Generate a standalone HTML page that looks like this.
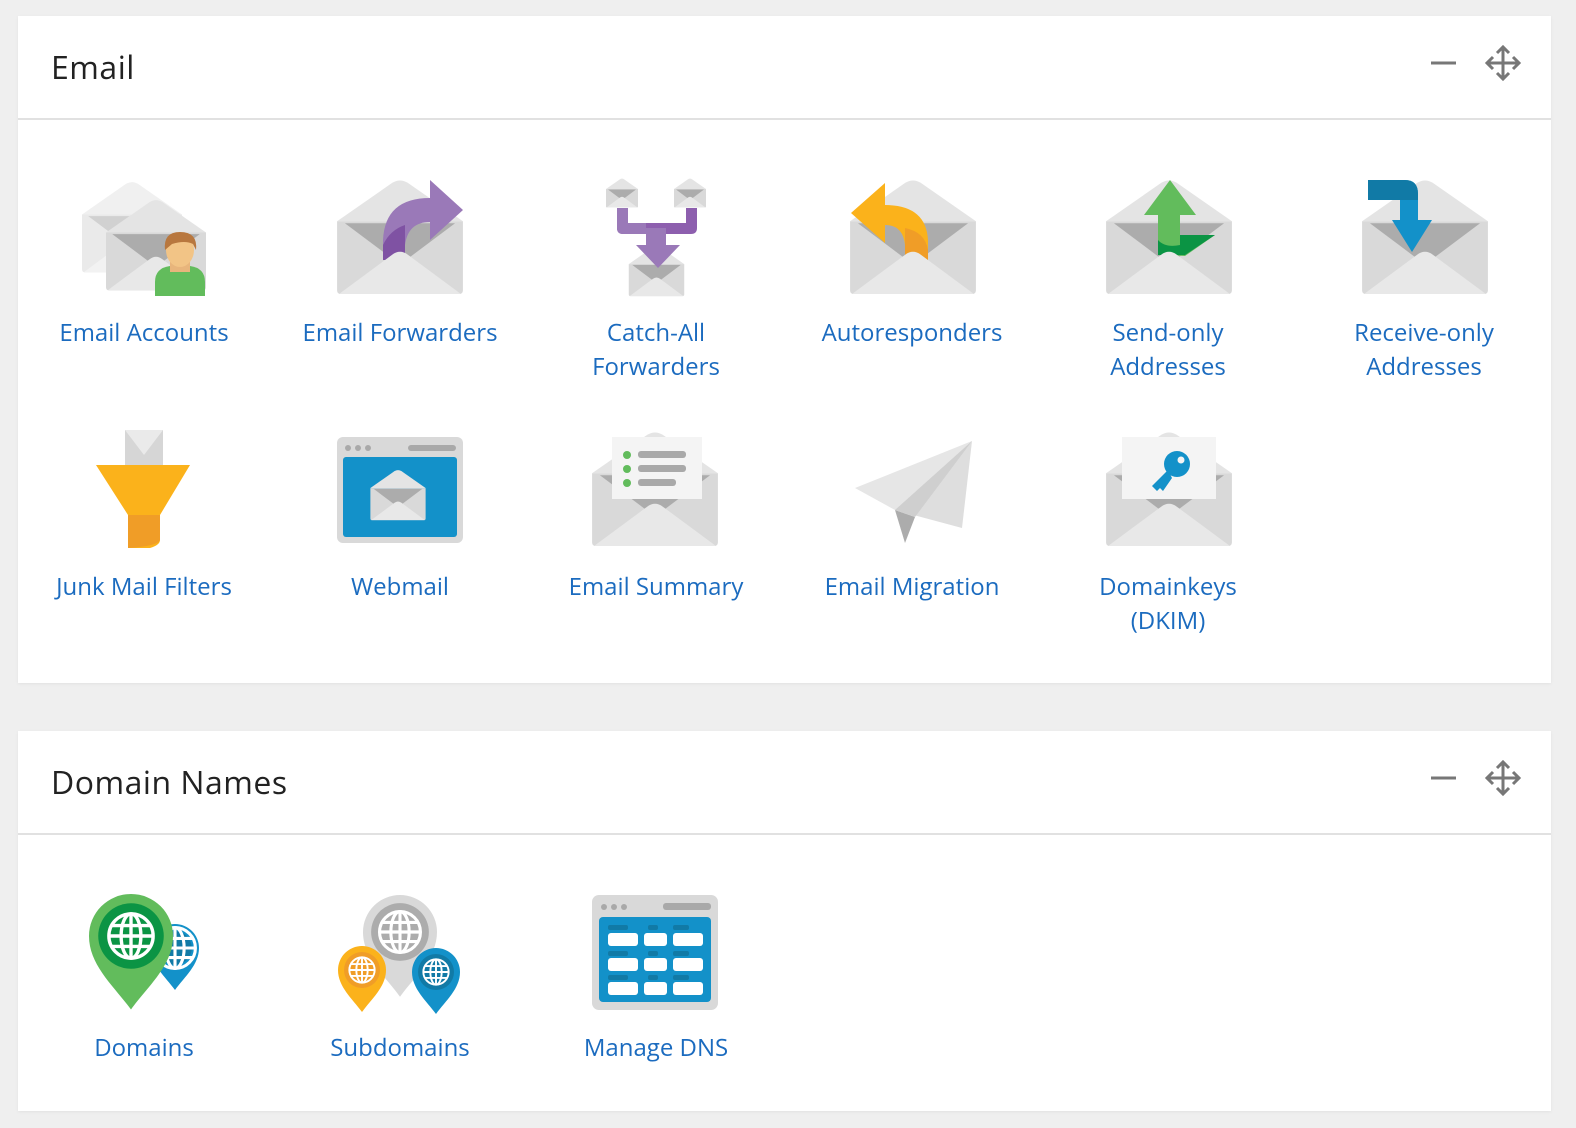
<!DOCTYPE html>
<html style="overflow:hidden"><head><meta charset="utf-8"><style>
html,body{margin:0;padding:0;overflow:hidden}
body{width:1576px;height:1128px;background:#efefef;font-family:"Open Sans","Liberation Sans",sans-serif;position:relative}
.panel{position:absolute;left:18px;width:1533px;background:#fff;box-shadow:0 1px 3px rgba(0,0,0,.06)}
.hd{height:102px;border-bottom:2px solid #e1e1e1;position:relative}
.hd h2{margin:0;position:absolute;left:33px;top:30px;font-weight:400;font-size:32px;color:#222;letter-spacing:.5px}
.lbl{position:absolute;width:256px;text-align:center;font-size:24px;line-height:34px;color:#1b6bbf}
svg.ov{position:absolute;left:0;top:0}
</style></head><body>
<div class="panel" style="top:16px;height:667px"><div class="hd"><h2>Email</h2></div></div>
<div class="panel" style="top:731px;height:380px"><div class="hd"><h2>Domain Names</h2></div></div>

<div class="lbl" style="left:16px;top:316px">Email Accounts</div>
<div class="lbl" style="left:272px;top:316px">Email Forwarders</div>
<div class="lbl" style="left:528px;top:316px">Catch-All<br>Forwarders</div>
<div class="lbl" style="left:784px;top:316px">Autoresponders</div>
<div class="lbl" style="left:1040px;top:316px">Send-only<br>Addresses</div>
<div class="lbl" style="left:1296px;top:316px">Receive-only<br>Addresses</div>
<div class="lbl" style="left:16px;top:570px">Junk Mail Filters</div>
<div class="lbl" style="left:272px;top:570px">Webmail</div>
<div class="lbl" style="left:528px;top:570px">Email Summary</div>
<div class="lbl" style="left:784px;top:570px">Email Migration</div>
<div class="lbl" style="left:1040px;top:570px">Domainkeys<br>(DKIM)</div>
<div class="lbl" style="left:16px;top:1031px">Domains</div>
<div class="lbl" style="left:272px;top:1031px">Subdomains</div>
<div class="lbl" style="left:528px;top:1031px">Manage DNS</div>

<svg class="ov" width="1576" height="1128" viewBox="0 0 1576 1128">
<defs>
<symbol id="eb" viewBox="0 0 128 120">
<path d="M0 44 L56 5 Q64 0 72 5 L128 44 Z" fill="#e4e4e4"/>
<path d="M0 44 H128 V114 Q128 118 124 118 H4 Q0 118 0 114Z" fill="#d9d9d9"/>
<path d="M8 46 H120 L64 88 Z" fill="#acacac"/>
</symbol>
<symbol id="ef" viewBox="0 0 128 120">
<path d="M2 118 L56 78 Q64 72 72 78 L126 118 Z" fill="#e8e8e8"/>
</symbol>
<symbol id="env" viewBox="0 0 128 120"><use href="#eb" width="128" height="120"/><use href="#ef" width="128" height="120"/></symbol>
<g id="globe" fill="none" stroke="#fff" stroke-width="0.13"><circle r="0.85"/><ellipse rx="0.38" ry="0.85"/><path d="M-0.85 0H0.85M-0.75 -0.4H0.75M-0.75 0.4H0.75M0 -0.85V0.85"/></g>
<path id="pin" d="M-1,0 A1,1 0 1,1 1,0 C1,0.7 0.4,1.2 0,1.75 C-0.4,1.2 -1,0.7 -1,0 Z"/>
</defs>

<g fill="none" stroke="#777" stroke-width="3">
<path d="M1431 63H1456M1431 778H1456"/>
<path d="M1503 48V78M1488 63H1518M1497 53L1503 47L1509 53M1497 73L1503 79L1509 73M1493 57L1487 63L1493 69M1513 57L1519 63L1513 69"/>
<path d="M1503 763V793M1488 778H1518M1497 768L1503 762L1509 768M1497 788L1503 794L1509 788M1493 772L1487 778L1493 784M1513 772L1519 778L1513 784"/>
</g>

<g opacity="0.55"><use href="#env" x="82" y="180" width="100" height="94"/></g>
<use href="#env" x="106" y="198" width="100" height="94"/>
<path d="M155 296 V282 Q155 268 170 266 H190 Q205 268 205 282 V296Z" fill="#62bc5c"/>
<rect x="170" y="256" width="20" height="16" fill="#e8b57c"/>
<ellipse cx="180" cy="250" rx="14" ry="17" fill="#f2c486"/>
<path d="M165 250 Q163 232 180 232 Q198 232 196 250 L193 244 Q185 240 172 244Z" fill="#b8773e"/>

<use href="#eb" x="337" y="178" width="126" height="118"/>
<path d="M383 260 V240 Q385 198 430 198 V180 L463 210 L430 240 V222 Q408 222 405 245 V260Z" fill="#9a79b8"/>
<path d="M383 260 V245 Q390 230 405 225 V260Z" fill="#7f52a3"/>
<use href="#ef" x="337" y="178" width="126" height="118"/>

<use href="#env" x="597" y="178" width="50" height="30"/>
<use href="#env" x="665" y="178" width="50" height="30"/>
<use href="#eb" x="620" y="245" width="73" height="52"/>
<path d="M617 208 V228 Q617 234 623 234 H691 Q697 234 697 228 V208 H686 V223 H628 V208Z" fill="#8d5fae"/>
<path d="M617 208 V228 Q617 234 623 234 H646 V223 H628 V208Z" fill="#9a79b8"/>
<path d="M646 228 H666 V245 H680 L658 268 L636 245 H646Z" fill="#9a79b8"/>
<use href="#ef" x="620" y="245" width="73" height="52"/>

<use href="#eb" x="850" y="178" width="126" height="118"/>
<path d="M928 260 V240 Q926 205 885 205 V183 L851 213 L885 243 V225 Q903 225 905 245 V260Z" fill="#fbb21b"/>
<path d="M905 228 Q925 232 928 250 V260 H905Z" fill="#f09d27"/>
<use href="#ef" x="850" y="178" width="126" height="118"/>

<use href="#eb" x="1106" y="178" width="126" height="118"/>
<path d="M1158 255 V215 H1144 L1170 180 L1196 215 H1180 V235 H1215 L1185 256Z" fill="#62bc5c"/>
<path d="M1158 240 V255 H1185 L1215 235 H1180 V245 Q1165 248 1158 240Z" fill="#0b9444"/>
<use href="#ef" x="1106" y="178" width="126" height="118"/>

<use href="#eb" x="1362" y="178" width="126" height="118"/>
<path d="M1368 180 H1405 Q1418 180 1418 194 V220 H1432 L1412 252 L1392 220 H1400 V200 H1368Z" fill="#1391c9"/>
<path d="M1368 180 H1405 Q1418 180 1418 194 V200 H1368Z" fill="#117aa6"/>
<use href="#ef" x="1362" y="178" width="126" height="118"/>

<path d="M125 430 H163 V470 H125Z" fill="#d6d6d6"/>
<path d="M125 430 L144 455 L163 430Z" fill="#eaeaea"/>
<path d="M96 465 H190 L160 515 V540 Q160 545 150 548 L128 548 V515Z" fill="#fbb21b"/>
<path d="M128 515 H160 V540 Q158 546 128 548Z" fill="#f09d27"/>

<rect x="337" y="437" width="126" height="106" rx="6" fill="#d9d9d9"/>
<circle cx="348" cy="448" r="3" fill="#a9a9a9"/><circle cx="358" cy="448" r="3" fill="#a9a9a9"/><circle cx="368" cy="448" r="3" fill="#a9a9a9"/>
<rect x="408" y="445" width="48" height="6" rx="3" fill="#a9a9a9"/>
<rect x="343" y="457" width="114" height="80" rx="3" fill="#1391c9"/>
<use href="#env" x="370" y="469" width="56" height="52"/>

<use href="#eb" x="592" y="430" width="126" height="118"/>
<rect x="612" y="437" width="90" height="62" fill="#f4f4f4"/>
<g fill="#62bc5c"><circle cx="627" cy="455" r="4"/><circle cx="627" cy="469" r="4"/><circle cx="627" cy="483" r="4"/></g>
<g fill="#a9a9a9"><rect x="638" y="451" width="48" height="7" rx="3"/><rect x="638" y="465" width="48" height="7" rx="3"/><rect x="638" y="479" width="38" height="7" rx="3"/></g>
<use href="#ef" x="592" y="430" width="126" height="118"/>

<path d="M855 488 L972 441 L895 510Z" fill="#e6e6e6"/>
<path d="M895 510 L972 441 L962 528Z" fill="#dedede"/>
<path d="M895 510 L905 543 L915 517Z" fill="#acacac"/>
<path d="M895 510 L972 441 L915 517Z" fill="#cfcfcf"/>

<use href="#eb" x="1106" y="430" width="126" height="118"/>
<rect x="1122" y="437" width="94" height="62" fill="#f4f4f4"/>
<circle cx="1177" cy="464" r="13" fill="#1391c9"/><circle cx="1181" cy="460" r="3.5" fill="#f4f4f4"/>
<path d="M1168 470 L1152 486 L1157 491 L1160 488 L1163 491 L1172 478Z" fill="#1391c9"/>
<use href="#ef" x="1106" y="430" width="126" height="118"/>

<g transform="translate(175 948) scale(24)"><use href="#pin" fill="#1391c9"/><circle r="0.7" fill="#117aa6"/><use href="#globe"/></g>
<g transform="translate(131 936) scale(42)"><use href="#pin" fill="#62bc5c"/><circle r="0.78" fill="#0b9444"/><g transform="scale(0.62)"><use href="#globe" style="stroke-width:0.2"/></g></g>

<g transform="translate(400 932) scale(37)"><use href="#pin" fill="#d9d9d9"/><circle r="0.78" fill="#acacac"/><g transform="scale(0.65)"><use href="#globe"/></g></g>
<g transform="translate(362 970) scale(24)"><use href="#pin" fill="#fbb21b"/><circle r="0.75" fill="#f09d27"/><g transform="scale(0.62)"><use href="#globe"/></g></g>
<g transform="translate(436 972) scale(24)"><use href="#pin" fill="#1391c9"/><circle r="0.75" fill="#117aa6"/><g transform="scale(0.62)"><use href="#globe"/></g></g>

<rect x="592" y="895" width="126" height="115" rx="7" fill="#d9d9d9"/>
<circle cx="604" cy="907" r="3" fill="#a9a9a9"/><circle cx="614" cy="907" r="3" fill="#a9a9a9"/><circle cx="624" cy="907" r="3" fill="#a9a9a9"/>
<rect x="663" y="903" width="48" height="7" rx="3" fill="#a9a9a9"/>
<rect x="599" y="917" width="112" height="85" rx="4" fill="#1391c9"/>
<g fill="#117aa6"><rect x="608" y="925" width="20" height="5" rx="2"/><rect x="648" y="925" width="10" height="5" rx="2"/><rect x="673" y="925" width="16" height="5" rx="2"/>
<rect x="608" y="951" width="20" height="5" rx="2"/><rect x="648" y="951" width="10" height="5" rx="2"/><rect x="673" y="951" width="16" height="5" rx="2"/>
<rect x="608" y="975" width="20" height="5" rx="2"/><rect x="648" y="975" width="10" height="5" rx="2"/><rect x="673" y="975" width="16" height="5" rx="2"/></g>
<g fill="#fff"><rect x="608" y="933" width="30" height="13" rx="3"/><rect x="644" y="933" width="23" height="13" rx="3"/><rect x="673" y="933" width="30" height="13" rx="3"/>
<rect x="608" y="958" width="30" height="13" rx="3"/><rect x="644" y="958" width="23" height="13" rx="3"/><rect x="673" y="958" width="30" height="13" rx="3"/>
<rect x="608" y="982" width="30" height="13" rx="3"/><rect x="644" y="982" width="23" height="13" rx="3"/><rect x="673" y="982" width="30" height="13" rx="3"/></g>
</svg>
</body></html>
